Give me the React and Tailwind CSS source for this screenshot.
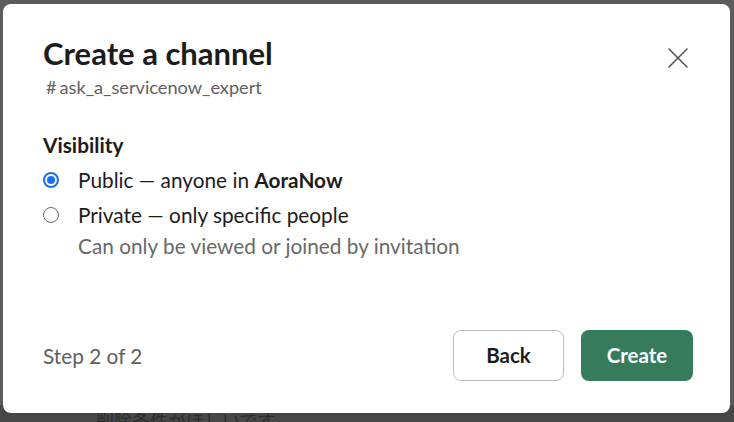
import React from "react";

function CloseIcon() {
  return (
    <svg width="20" height="20" viewBox="0 0 20 20" fill="none">
      <path d="M1 1L19 19M19 1L1 19" stroke="#555" strokeWidth="1.6" strokeLinecap="round" />
    </svg>
  );
}

function Radio({ checked }) {
  if (checked) {
    return (
      <span className="w-4 h-4 shrink-0 rounded-full border-[2px] border-[#1d6ff2] flex items-center justify-center">
        <span className="w-2 h-2 rounded-full bg-[#1d6ff2]" />
      </span>
    );
  }
  return <span className="w-4 h-4 shrink-0 rounded-full border border-[#6b6b6b] bg-white" />;
}

export default function App() {
  return (
    <div className="w-[734px] h-[422px] bg-[#5c5c5c] relative overflow-hidden font-['Lato','Liberation_Sans',sans-serif]">
      <div className="absolute left-0 top-[405px] w-[734px] h-[17px] bg-[#474747]" />
      <div className="absolute left-[96px] top-[408px] text-[#222] text-[18px] leading-[24px] font-['Noto_Sans_CJK_JP',sans-serif] opacity-70">
        削除条件がほしいです。
      </div>
      <div className="absolute left-[3px] top-[4px] w-[727px] h-[409px] bg-white rounded-[8px] flex flex-col">
        <div className="flex justify-between pl-[40px] pr-[42px] pt-[29px]">
          <div className="flex flex-col">
            <h1 className="text-[31px] leading-[40px] font-bold text-[#1d1c1d]">Create a channel</h1>
            <div className="text-[18.2px] leading-[24px] text-[#616061] pl-[3px] mt-[2px]">
              <span className="mr-[3px]">#</span>ask_a_servicenow_expert
            </div>
          </div>
          <div className="pt-[15px]">
            <CloseIcon />
          </div>
        </div>

        <div className="pl-[40px] pt-[32px] flex flex-col">
          <div className="text-[20.8px] leading-[28px] font-bold text-[#1d1c1d]">Visibility</div>
          <label className="flex items-center gap-[19px] mt-[7px] text-[20.8px] leading-[28px] text-[#1d1c1d]">
            <Radio checked />
            <span>
              Public — anyone in <span className="font-bold">AoraNow</span>
            </span>
          </label>
          <label className="flex items-center gap-[19px] mt-[7px] text-[20.8px] leading-[28px] text-[#1d1c1d]">
            <Radio />
            <span>Private — only specific people</span>
          </label>
          <div className="pl-[35px] mt-[3px] text-[20.8px] leading-[28px] text-[#696969]">
            Can only be viewed or joined by invitation
          </div>
        </div>

        <div className="mt-auto flex items-center justify-between pl-[40px] pr-[37px] pb-[32px]">
          <div className="text-[20.8px] text-[#616061]">Step 2 of 2</div>
          <div className="flex gap-[17px]">
            <button className="w-[111px] h-[51px] rounded-[8px] border border-[#bdbdbd] bg-white text-[20.5px] font-bold text-[#1d1c1d]">
              Back
            </button>
            <button className="w-[112px] h-[51px] rounded-[8px] bg-[#357b5c] text-[20.5px] font-bold text-white">
              Create
            </button>
          </div>
        </div>
      </div>
    </div>
  );
}
